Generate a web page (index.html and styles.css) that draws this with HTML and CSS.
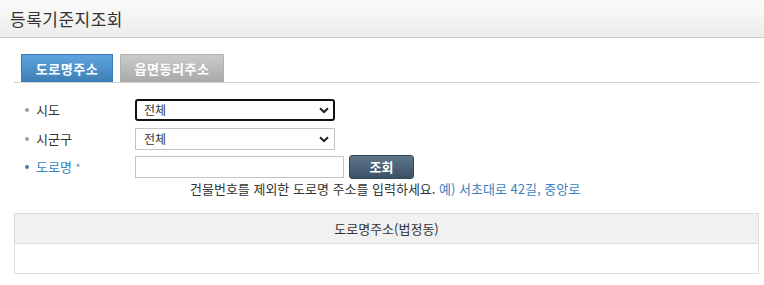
FILE: index.html
```html
<!DOCTYPE html>
<html lang="ko">
<head>
    <meta charset="UTF-8">
    <title>등록기준지조회</title>
    <link rel="stylesheet" href="styles.css">
</head>
<body>
    <div class="header">
        <h1 class="header-title">등록기준지조회</h1>
    </div>

    <div class="content">
        <!-- 주소 구분 탭 -->
        <div class="tabs">
            <div class="tab tab-active">도로명주소</div>
            <div class="tab">읍면동리주소</div>
        </div>

        <!-- 검색 조건 -->
        <div class="search-form">
            <div class="form-row">
                <span class="form-label">시도</span>
                <div class="select-wrap">
                    <select class="select-box select-focus">
                        <option>전체</option>
                    </select>
                    <svg class="select-arrow" width="10" height="7" viewBox="0 0 10 7">
                        <path d="M1 1.2 L5 5 L9 1.2" fill="none" stroke="#222" stroke-width="2"/>
                    </svg>
                </div>
            </div>
            <div class="form-row">
                <span class="form-label">시군구</span>
                <div class="select-wrap">
                    <select class="select-box">
                        <option>전체</option>
                    </select>
                    <svg class="select-arrow" width="10" height="7" viewBox="0 0 10 7">
                        <path d="M1 1.2 L5 5 L9 1.2" fill="none" stroke="#222" stroke-width="2"/>
                    </svg>
                </div>
            </div>
            <div class="form-row">
                <span class="form-label form-label-required">도로명 <em>*</em></span>
                <input type="text" class="input-field">
                <button class="search-button">조회</button>
            </div>
            <p class="search-hint">건물번호를 제외한 도로명 주소를 입력하세요. <span class="hint-example">예) 서초대로 42길, 중앙로</span></p>
        </div>

        <!-- 결과 목록 -->
        <table class="result-table">
            <thead>
                <tr><th>도로명주소(법정동)</th></tr>
            </thead>
            <tbody>
                <tr><td></td></tr>
            </tbody>
        </table>
    </div>
</body>
</html>
```

FILE: styles.css
```css
body {
    margin: 0;
    font-family: "Noto Sans CJK KR", "Noto Sans", sans-serif;
    font-size: 12px;
    color: #333;
    background-color: #fff;
}

.header {
    height: 37px;
    border-bottom: 1px solid #c9c9c9;
    background: linear-gradient(to bottom, #fbfbfb, #ececec);
    display: flex;
    align-items: center;
    padding-left: 10px;
}

.header-title {
    margin: 0;
    font-size: 17px;
    font-weight: normal;
    color: #333;
    letter-spacing: 0.5px;
}

.content {
    padding: 16px 5px 0 14px;
}

.tabs {
    display: flex;
    gap: 7px;
    padding-left: 7px;
    border-bottom: 1px solid #d2d2d2;
}

.tab {
    width: 104px;
    height: 28px;
    line-height: 28px;
    box-sizing: border-box;
    font-size: 13px;
    font-weight: bold;
    color: #fff;
    text-align: center;
    white-space: nowrap;
    letter-spacing: 0.5px;
    border: 1px solid #b0b0b0;
    border-bottom: none;
    background: linear-gradient(to bottom, #cbcbcb, #a9a9a9);
}

.tab-active {
    width: 92px;
    border-color: #3d78b0;
    background: linear-gradient(to bottom, #5ea4df, #3e7fb7);
}

.search-form {
    padding: 12px 0 0 10px;
}

.form-row {
    display: flex;
    align-items: center;
    height: 29px;
}

.form-row:nth-child(3) {
    height: 27px;
}

.form-label {
    width: 111px;
    font-size: 13px;
    color: #333;
    position: relative;
    padding-left: 12px;
    box-sizing: border-box;
}

.form-label::before {
    content: "";
    position: absolute;
    left: 1px;
    top: 50%;
    width: 4px;
    height: 4px;
    margin-top: -2px;
    border-radius: 50%;
    background-color: #a0a0a0;
}

.form-label-required {
    color: #3a7fc0;
}

.form-label-required::before {
    background-color: #3a7fc0;
}

.form-label em {
    font-style: normal;
    font-size: 11px;
    color: #6d8fb0;
}

.select-wrap {
    position: relative;
}

.select-box {
    -webkit-appearance: none;
    appearance: none;
    width: 200px;
    height: 22px;
    padding: 0 0 0 8px;
    font-family: inherit;
    font-size: 12px;
    color: #333;
    border: 1px solid #c4c4c4;
    background-color: #fff;
    border-radius: 0;
    outline: none;
}

.select-focus {
    border: 2px solid #111;
    border-radius: 3px;
    padding-left: 7px;
}

.select-arrow {
    position: absolute;
    right: 6px;
    top: 8px;
    pointer-events: none;
}

.input-field {
    width: 209px;
    height: 22px;
    box-sizing: border-box;
    border: 1px solid #c4c4c4;
    padding: 0 6px;
    font-family: inherit;
    font-size: 12px;
    outline: none;
}

.search-button {
    margin-left: 5px;
    width: 65px;
    height: 24px;
    border: 1px solid #34495a;
    border-radius: 3px;
    background: linear-gradient(to bottom, #5f778b, #3c5064);
    color: #fff;
    font-family: inherit;
    font-size: 13px;
    font-weight: bold;
    cursor: pointer;
}

.search-hint {
    margin: 0;
    padding-left: 166px;
    font-size: 13px;
    line-height: 18px;
    color: #333;
}

.hint-example {
    color: #3a7fc0;
}

.result-table {
    width: 100%;
    margin-top: 15px;
    border-collapse: collapse;
    border: 1px solid #dcdcdc;
}

.result-table th {
    height: 29px;
    padding: 0;
    font-size: 13px;
    font-weight: normal;
    color: #333;
    background-color: #f1f1f1;
    border-bottom: 1px solid #dcdcdc;
}

.result-table td {
    height: 29px;
    padding: 0;
}
```
